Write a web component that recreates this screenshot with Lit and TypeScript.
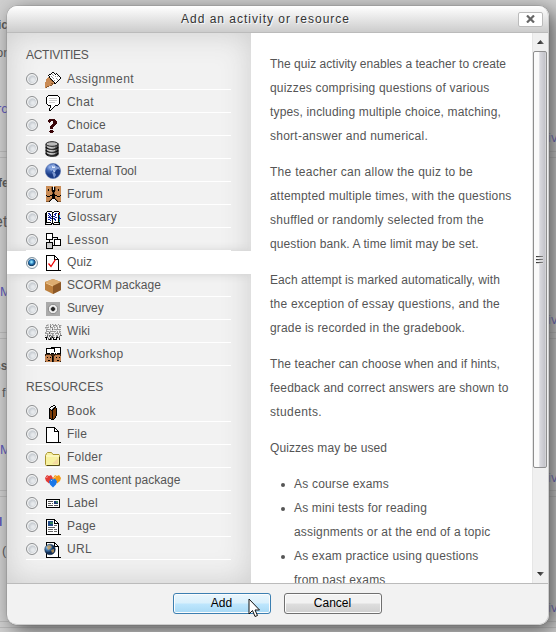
import { LitElement, html, svg, css, nothing } from "lit";
import { customElement, state, property } from "lit/decorators.js";
import { classMap } from "lit/directives/class-map.js";

const FONT = '"Liberation Sans", Arial, sans-serif';

const palette: Record<string, string> = {
  k: "#000", w: "#fff", g: "#999", l: "#ccc", d: "#666", t: "#c98b55", b: "#8a5a30",
  r: "#3a0508", n: "#7a3c08", u: "#1020a0", c: "#00b0d0", e: "#e02020", v: "#207050",
};

const PAGE = [
  " kkkkkkkkk", " kwwwwwwwkk", " kwwwwwwwkwk", " kwwwwwwwkwwk", " kwwwwwwwkkkkk",
  ...Array(10).fill(" kwwwwwwwwwwwk"), " kkkkkkkkkkkkkkk",
];

const pixels = (rows: string[]) => svg`<g shape-rendering="crispEdges">${
  rows.map((row, y) =>
    [...row].map((ch, x) =>
      palette[ch] ? svg`<rect x=${x} y=${y} width="1" height="1" fill=${palette[ch]}></rect>` : nothing))}</g>`;

const art: Record<string, () => unknown> = {
  assignment: () => pixels([
    "       kk", "      kwwk k", "    kkwgwwkwk", "   kwwwwgwwwwk", "    kwgwwwgwgwk", "   tkwwgwwwwwwwk",
    "  tttkwwgwwgwwwk", " ttttbkwwwwwgwk", " tttttbkwgwwwk", " ttttttbkwwwk", "tttttttttkwk", "ttttttbbtkk",
    "tttttttb", "tttttbb", "ttbb", "tb"]),
  chat: () => pixels([
    "   kkkkkkkkkk", "  kwwwwwwwwwwk", " kwwwwwwwwwwwwk", " kwwllllllllwwk", " kwwwwwwwwwwwwk", " kwwllllllllwwk",
    " kwwwwwwwwwwwwk", " kwwllllllwwwwk", " kwwwwwwwwwwwwk", "  kwwwwwwwwwwk", "   kkkwwwwkkk", "     kwwwk",
    "     kwwk", "    kwwk", "    kwk", "    kk"]),
  choice: () => pixels([
    "", "    rrrrrr", "   rrrrrrrr", "   rrr  rrrr", "    r   rrrr", "        rrrr", "       rrrr", "      rrrr", "     rrrr",
    "     rrr", "     rrr", "", "     rrr", "    rrrrr", "     rrr"]),
  database: () => svg`
    <path d="M3 2h11v12l-3 2H5z" fill="#aaa"/><path d="M1 3v10c0 3 12 3 12 0V3z" fill="url(#metal)" stroke="#222"/>
    <ellipse cx="7" cy="3" rx="6" ry="2.3" fill="#bbb" stroke="#222"/>
    <path d="M1 6c1 3 11 3 12 0M1 9c1 3 11 3 12 0M1 12c1 3 11 3 12 0" fill="none" stroke="#111" stroke-width="1.2"/>
    <path d="M2 5.500c3 2 6 2 8 1M2 8.500c3 2 6 2 8 1M2 11.500c3 2 6 2 8 1" stroke="#ddd" stroke-width=".7" fill="none"/>`,
  tool: () => svg`
    <circle cx="8" cy="8" r="7.6" fill="url(#globe)" stroke="#526eae" stroke-width=".6"/>
    <path d="M6 2l3-1 2 2 3 1 1 3-2-1-2 1-1 2-2-2-2 1-1-2 2-1zM7 9l3 1 1 2-2 3-1-3z" fill="#9db7e8" opacity=".75"/>
    <path d="M7 3l2 1 1-1v2H7zM8 7l2 1-1 2z" fill="#e3eeff"/>`,
  forum: () => pixels([
    " ttttttt ttttttt", " tttttbk kbttttt", " tttttbk kbttttt", " ttkttbk kbttktt", " ttkttbkkkbttktt", " ttttttkkktttttt",
    " ttttttbkbtttttt", " ttttttbkbtttttt", " ttttttkkktttttt", " ktttkkkkkkktttk", " tkkkttkkkttkkkt", " ttttttkkktttttt",
    " tttttbkkkbttttt", " ttttbk   kbtttt", " tttbk     kbttt", " bbbk       kbbb"]),
  glossary: () => pixels([
    "", "  kkkkk  kkkkk", " kwwwwwkkwwwwwk", "kkwuuwwkwwuuwke", "kkwwuuwkwuuwwke", "kkwuwuwkwwuwwkc", "kkwwuwukuuwwwkc",
    "kkwuuuwkwwuuwku", "kkwwwuukuuwwwkuu", "kkwuuwwkwuuwwkc", "kkwwwuwkwwuwwkv", "kkwwwwwkwwwwwkc", "kkkkkkwkwkkkkkk", "klwwwwkkkwwwwlk", "kkkkkkk kkkkkkk"]),
  lesson: () => svg`<g shape-rendering="crispEdges" fill="#fff" stroke="#000">
    <path d="M4.5 6v4M7 4.500h5.500V7M8 12.500h4.500" fill="none"/><path d="M1.500 .5h6v6h-6zM9.500 6.500h6v6h-6z"/><path d="M1.500 9.500h6v6h-6z" fill="#ccc"/></g>`,
  quiz: () => svg`${pixels(PAGE)}<path d="M3.500 8.500l2.500 3L10.500 4.500" fill="none" stroke="#e00" stroke-width="1.3"/>`,
  scorm: () => svg`<path d="M0 4l8-3 8 3v8l-8 4-8-4z" fill="#bd803e"/><path d="M0 4l8-3 8 3-8 4z" fill="#dcac70"/>
    <path d="M8 8l8-4v8l-8 4z" fill="#8c5827"/><path d="M1 5l7 3" stroke="#efc890" fill="none"/>`,
  survey: () => svg`<path d="M1 1h14v14H1z" fill="#aaa"/><circle cx="8" cy="8" r="4.700" fill="#eee" stroke="#888"/><circle cx="8" cy="8" r="2" fill="#000"/><path d="M5 8h6M8 5v6" stroke="#555" stroke-width=".5"/>`,
  wiki: () => pixels([
    "  ll g gl g  g", " ggl gl ggggl ggl", " l l d  gl gl gl", "gggg ggg gl g gg", "lll  l g l  g", " ggggl dlggggggg",
    " g   l l   l  l", " ggglgggggg g gg", "gl  dl   l lg gl", "gggldlggg gggg g", "  gl l gl l  g g", "g dlddlggl gg ldd",
    " ld d ddl  gd d", "kkdl ddkdd kkdd", " k d kd k  k  k", " k dkkd kkkk  k"]),
  workshop: () => svg`<g shape-rendering="crispEdges"><path d="M6.500.5h9v6h-3l-2 2v-2h-4z" fill="#fff" stroke="#000"/><path d="M1.500 1.500h8v5h-3l-2 2v-2h-3z" fill="#fff" stroke="#000"/>
    <path d="M0 7h16v8H0z" fill="#3a2412"/><path d="M1 8h5v1h1v6H1v-1H0V9h1zM9 9h1V8h5v1h1v5h-1v1H9z" fill="#c48350"/>
    <path d="M6.500 5h6v1h-2l-2 2v-2h-2z" fill="#fff"/>
    <path d="M2 10h1v1H2zM5 10h1v1H5zM11 10h1v1h-1zM14 10h1v1h-1zM3 13h2v1H3zM12 13h2v1h-2zM7 9h1v6H7z" fill="#000"/></g>`,
  book: () => pixels([
    "", "        kk", "      kkwwk", "     kwwlkk", "    kwwlkknk", "    kklkknnk", "    knkknnnk", "    knnknnnk", "    knnknnnk",
    "    knnknnnk", "    knnknnnk", "    knnknnnk", "    knnknnk", "    knnknnk", "    kknknk", "      kkk"]),
  file: () => pixels(PAGE),
  folder: () => svg`<path d="M.5 5.500l1-2 1-1h4l1.500 2h6l.5 1V14l-1 1.500H1l-.5-1z" fill="#f7f1a0" stroke="#a9942e"/>
    <path d="M1 6h13" stroke="#fffcd8"/><path d="M7 14l6-6v6z" fill="#f5d9a0"/><path d="M14.500 7v8.500H2" stroke="#554b18" fill="none"/>`,
  ims: () => svg`<path d="M0 5l2-3 2 1 2-1 2 3-1 3-3 2.500L1 8z" fill="#e33b35"/><path d="M8 5l2-3 2 1 2-1 2 3-1 3-3 2.500L9 8z" fill="#f49b15"/>
    <path d="M4 8.500l2-3 2 1 2-1 2 3-1 3-3 3-3-3z" fill="#1976e8"/><path d="M1.500 5l1-1.500M9.500 5l1-1.500M6 8l1-1" stroke="#fff" opacity=".6"/>`,
  label: () => svg`<g shape-rendering="crispEdges"><path d="M1.500 3.500h13v8h-13z" fill="#fff" stroke="#000"/>
    <path d="M3 5.500h5M3 7.500h3M7 7.500h1M3 9.500h5M9 9.500h4" stroke="#555" stroke-width="1"/><path d="M9 5h4v3H9z" fill="#203c78"/><path d="M11 5h2v2h-2z" fill="#398260"/></g>`,
  page: () => svg`${pixels(PAGE)}<path d="M3 2h5v5H3z" fill="#214b86"/><path d="M5 3h3v2H5z" fill="#348457"/>
    <path d="M9 6.500h3M3 8.500h7M3 10.500h5M9 10.500h3M3 12.500h5M9 12.500h3" stroke="#666"/>`,
  url: () => svg`${pixels(PAGE)}<circle cx="5" cy="7.500" r="5.300" fill="url(#earth)" stroke="#142840" stroke-width=".5"/>
    <path d="M2 4l3-1 2 2-2 2-2 1zM6 8l3-1v3l-2 1z" fill="#c79b55" opacity=".8"/>`,
};

const defs = svg`<defs>
  <linearGradient id="metal"><stop stop-color="#777"/><stop offset=".35" stop-color="#ccc"/><stop offset="1" stop-color="#444"/></linearGradient>
  <radialGradient id="globe" cx=".3" cy=".25"><stop stop-color="#9cb9ef"/><stop offset=".5" stop-color="#4268b4"/><stop offset="1" stop-color="#1c3c85"/></radialGradient>
  <radialGradient id="earth" cx=".3" cy=".3"><stop stop-color="#bcd9ef"/><stop offset=".5" stop-color="#437cb5"/><stop offset="1" stop-color="#122f57"/></radialGradient>
</defs>`;

@customElement("module-icon")
class ModuleIcon extends LitElement {
  @property() name = "";
  static styles = css`:host { display: block; width: 16px; height: 16px; } svg { display: block; overflow: visible; }`;
  render() {
    return html`<svg width="16" height="16" viewBox="0 0 16 16">${defs}${art[this.name]?.()}</svg>`;
  }
}

const measurer = document.createElement("canvas").getContext("2d")!;
/* Letter spacing that brings a 12px line of text to the given width. */
const spacing = (text: string, width: number) => {
  measurer.font = `12px ${FONT}`;
  return `letter-spacing:${((width - measurer.measureText(text).width) / text.length).toFixed(3)}px`;
};

type Line = [string, number];
type Item = [string, string, number];

const ACTIVITIES: Item[] = [
  ["assignment", "Assignment", 67], ["chat", "Chat", 27], ["choice", "Choice", 39], ["database", "Database", 54],
  ["tool", "External Tool", 70], ["forum", "Forum", 36], ["glossary", "Glossary", 50], ["lesson", "Lesson", 42],
  ["quiz", "Quiz", 25], ["scorm", "SCORM package", 94], ["survey", "Survey", 36.5], ["wiki", "Wiki", 23], ["workshop", "Workshop", 56.5],
];
const RESOURCES: Item[] = [
  ["book", "Book", 29], ["file", "File", 20], ["folder", "Folder", 35.5], ["ims", "IMS content package", 113.5],
  ["label", "Label", 31], ["page", "Page", 29], ["url", "URL", 25],
];
/* Rows whose baseline, and icon, sit one pixel higher. */
const RAISED_LABEL = new Set(["quiz", "scorm", "survey", "wiki", "workshop"]);
const RAISED_ICON = new Set([...RAISED_LABEL, "tool", "forum"]);

const PARAGRAPHS: Line[][] = [
  [["The quiz activity enables a teacher to create", 236], ["quizzes comprising questions of various", 219.5],
   ["types, including multiple choice, matching,", 231], ["short-answer and numerical.", 158]],
  [["The teacher can allow the quiz to be", 203], ["attempted multiple times, with the questions", 241.5],
   ["shuffled or randomly selected from the", 214], ["question bank. A time limit may be set.", 210]],
  [["Each attempt is marked automatically, with", 230], ["the exception of essay questions, and the", 230],
   ["grade is recorded in the gradebook.", 195]],
  [["The teacher can choose when and if hints,", 230], ["feedback and correct answers are shown to", 238.5], ["students.", 52]],
  [["Quizzes may be used", 117]],
];
const USES: Line[][] = [
  [["As course exams", 95]],
  [["As mini tests for reading", 133], ["assignments or at the end of a topic", 196.5]],
  [["As exam practice using questions", 184.5], ["from past exams", 91.5]],
];

@customElement("app-root")
class AppRoot extends LitElement {
  @state() selected = "quiz";

  static styles = css`
    :host { display: block; position: relative; width: 556px; height: 632px; overflow: hidden; background: #d0d0d0;
      font: 12px/24px "Liberation Sans", Arial, sans-serif; color: #555; box-sizing: border-box; padding: 6px 7px; }
    * { box-sizing: border-box; }
    .behind { position: absolute; inset: 0; }
    .scrap { position: absolute; font-size: 13px; line-height: 16px; white-space: nowrap; color: #555; }
    .link { color: #5550b8; }
    .bold { font-weight: bold; font-size: 12px; }
    .big { font-size: 16px; }
    .rule { position: absolute; left: 0; right: 0; height: 7px; border: solid #b9b9b9; border-width: 1px 0; }
    .dialog { position: relative; height: 619px; display: grid; grid-template-rows: 27px 550px 42px; background: #f2f2f2;
      border-radius: 10px; box-shadow: 5px 5px 20px #555, 0 0 0 .5px #aaa; overflow: hidden; }
    .frame { position: absolute; inset: 0; border-radius: 10px; border-right: 1px solid #ccc; border-bottom: 1px solid #ccc; pointer-events: none; }
    header { display: grid; grid-template-columns: 1fr auto 1fr; align-items: center; background: linear-gradient(#fff, #ccc);
      border-bottom: 1px solid #bbb; color: #333; text-shadow: 1px 1px 1px #fff; padding-right: 6px; }
    .title { grid-column: 2; margin-left: -19px; }
    .close { justify-self: end; width: 25px; height: 15px; border: 1px solid #bbb; border-radius: 2px; background: #fff; display: grid; place-items: center; padding: 0; }
    .body { display: grid; grid-template-columns: 244px 281px 16px; overflow: hidden; background: #fff; }
    .choices { background: #f2f2f2; box-shadow: inset 0 0 30px 0 #ccc; padding-top: 10px; overflow: hidden; }
    h2 { margin: 0; padding-left: 19px; font-size: 12px; font-weight: normal; line-height: 24px; height: 24px; }
    h2 + .list { margin-bottom: 9px; }
    .row { height: 23px; display: flex; padding: 0 20px 0 19px; }
    .inner { flex: 1; border-bottom: 1px solid #fff; display: grid; grid-template-columns: 19px 22px 1fr; align-items: start; }
    .row.on { background: #fff; box-shadow: 0 0 10px #ccc; }
    .radio { width: 12px; height: 12px; margin-top: 6px; border-radius: 50%; border: 1px solid #8d8f91;
      background: radial-gradient(circle at 60% 60%, #e6e9ec 0 15%, #c9ced3 45%, #dfe2e5 62%); box-shadow: inset 0 0 0 1px #f8f8f8; }
    .on .radio { border-color: #7f93a0; background: radial-gradient(circle at 45% 40%, #8de0fa 0 8%, #2477b8 28%, #11385f 46%, #e9f3f8 56%); }
    module-icon { margin-top: 5px; }
    .raised-icon module-icon { margin-top: 4px; }
    .label { white-space: nowrap; line-height: 23px; height: 22px; padding-top: 1px; }
    .raised-label .label { padding-top: 0; }
    .help { padding: 19px 0 0 19px; overflow: hidden; }
    p { margin: 0 0 12px; }
    .line { display: block; white-space: nowrap; height: 24px; }
    ul { margin: 0; padding: 0 0 0 24px; list-style: none; }
    li { display: grid; grid-template-columns: 0 1fr; }
    .bullet { width: 4px; height: 4px; border-radius: 50%; background: #555; margin: 11px 0 0 -13px; }
    .bar { background: #f0f0f0; display: grid; grid-template-rows: 18px 417px 1fr; border-left: 1px solid #e6e6e6; }
    .arrow { align-self: center; justify-self: center; width: 7px; height: 4px; background: linear-gradient(90deg,#111,#777); clip-path: polygon(50% 0,100% 100%,0 100%); }
    .down { align-self: end; margin-bottom: 7px; clip-path: polygon(0 0,100% 0,50% 100%); }
    .thumb { margin-right: 1px; padding-right: 2px; border: 1px solid #8e8e8e; border-radius: 2px; background: linear-gradient(90deg,#fafafa 0 40%,#d9d9de 48%,#c4c4ca 90%,#ddd); display: grid; place-content: center; gap: 1px; }
    .thumb i { width: 7px; height: 2px; background: linear-gradient(90deg,#333,#888); border-bottom: 1px solid #ddd; }
    footer { border-top: 1px solid #bbb; display: flex; justify-content: center; gap: 13px; padding: 9px 2px 0 0; }
    .btn { width: 98px; height: 21px; margin: 0; padding: 0; font: 12px/19px "Liberation Sans", Arial, sans-serif; color: #000; border: 1px solid #707070; border-radius: 3px;
      background: linear-gradient(#f2f2f2 0 48%,#dedede 52%,#cfcfcf); box-shadow: inset 0 0 0 1px #fcfcfc; }
    .btn.hot { border-color: #3c7fb1; background: linear-gradient(#eaf6fd 0%,#d9f0fc 48%,#bee6fd 52%,#a7d9f5); }
    .cursor { position: absolute; left: 248px; top: 598px; }
  `;

  private line = ([text, width]: Line) => html`<span class="line" style=${spacing(text, width)}>${text}</span>`;

  private row = ([id, name, width]: Item) => html`
    <div class=${classMap({ row: true, on: this.selected === id, "raised-label": RAISED_LABEL.has(id), "raised-icon": RAISED_ICON.has(id) })}
      @click=${() => (this.selected = id)}>
      <div class="inner"><span class="radio"></span><module-icon name=${id}></module-icon>
        <span class="label" style=${spacing(name, width)}>${name}</span></div>
    </div>`;

  private scrap(text: string, x: number, y: number, kind = "") {
    return html`<span class="scrap ${kind}" style="left:${x}px;top:${y}px">${text}</span>`;
  }

  render() {
    return html`
      <div class="behind">
        ${[151, 332, 490, 621].map(y => html`<div class="rule" style="top:${y}px"></div>`)}
        ${this.scrap("ic", -2, 17, "bold")}${this.scrap("or", -4, 45)}${this.scrap("rc", -3, 101, "link")}
        ${this.scrap("fe", -2, 175, "bold")}${this.scrap("et", -6, 214, "big")}${this.scrap("M", 0, 284, "link")}
        ${this.scrap("ss", -6, 358, "bold")}${this.scrap("f", 2, 385)}${this.scrap("M", 0, 442, "link")}
        ${this.scrap("l", -1, 514, "link bold")}${this.scrap("(", 2, 543)}
        ${[130, 312, 470, 600].map(y => this.scrap("iv", 548, y, "link"))}
      </div>
      <section class="dialog">
        <header>
          <span class="title" style=${spacing("Add an activity or resource", 169)}>Add an activity or resource</span>
          <button class="close" aria-label="Close"><svg width="9" height="8" viewBox="0 0 9 8"><path d="M1 .5l7 7M8 .5l-7 7" stroke="#666" stroke-width="2.200"/></svg></button>
        </header>
        <div class="body">
          <div class="choices">
            <h2 style=${spacing("ACTIVITIES", 62.5)}>ACTIVITIES</h2>
            <div class="list">${ACTIVITIES.map(this.row)}</div>
            <h2 style=${spacing("RESOURCES", 77.5)}>RESOURCES</h2>
            <div class="list">${RESOURCES.map(this.row)}</div>
          </div>
          <div class="help">
            ${PARAGRAPHS.map(p => html`<p>${p.map(this.line)}</p>`)}
            <ul>${USES.map(u => html`<li><span class="bullet"></span><div>${u.map(this.line)}</div></li>`)}</ul>
          </div>
          <div class="bar"><span class="arrow"></span><div class="thumb"><i></i><i></i><i></i></div><span class="arrow down"></span></div>
        </div>
        <footer><button class="btn hot">Add</button><button class="btn">Cancel</button></footer>
        <div class="frame"></div>
      </section>
      <svg class="cursor" width="13" height="20" viewBox="0 0 13 20"><path d="M1 1v15l3.500-3.500L7 18.500l2.500-1L7 12h4.500z" fill="#fff" stroke="#111"/></svg>
    `;
  }
}
